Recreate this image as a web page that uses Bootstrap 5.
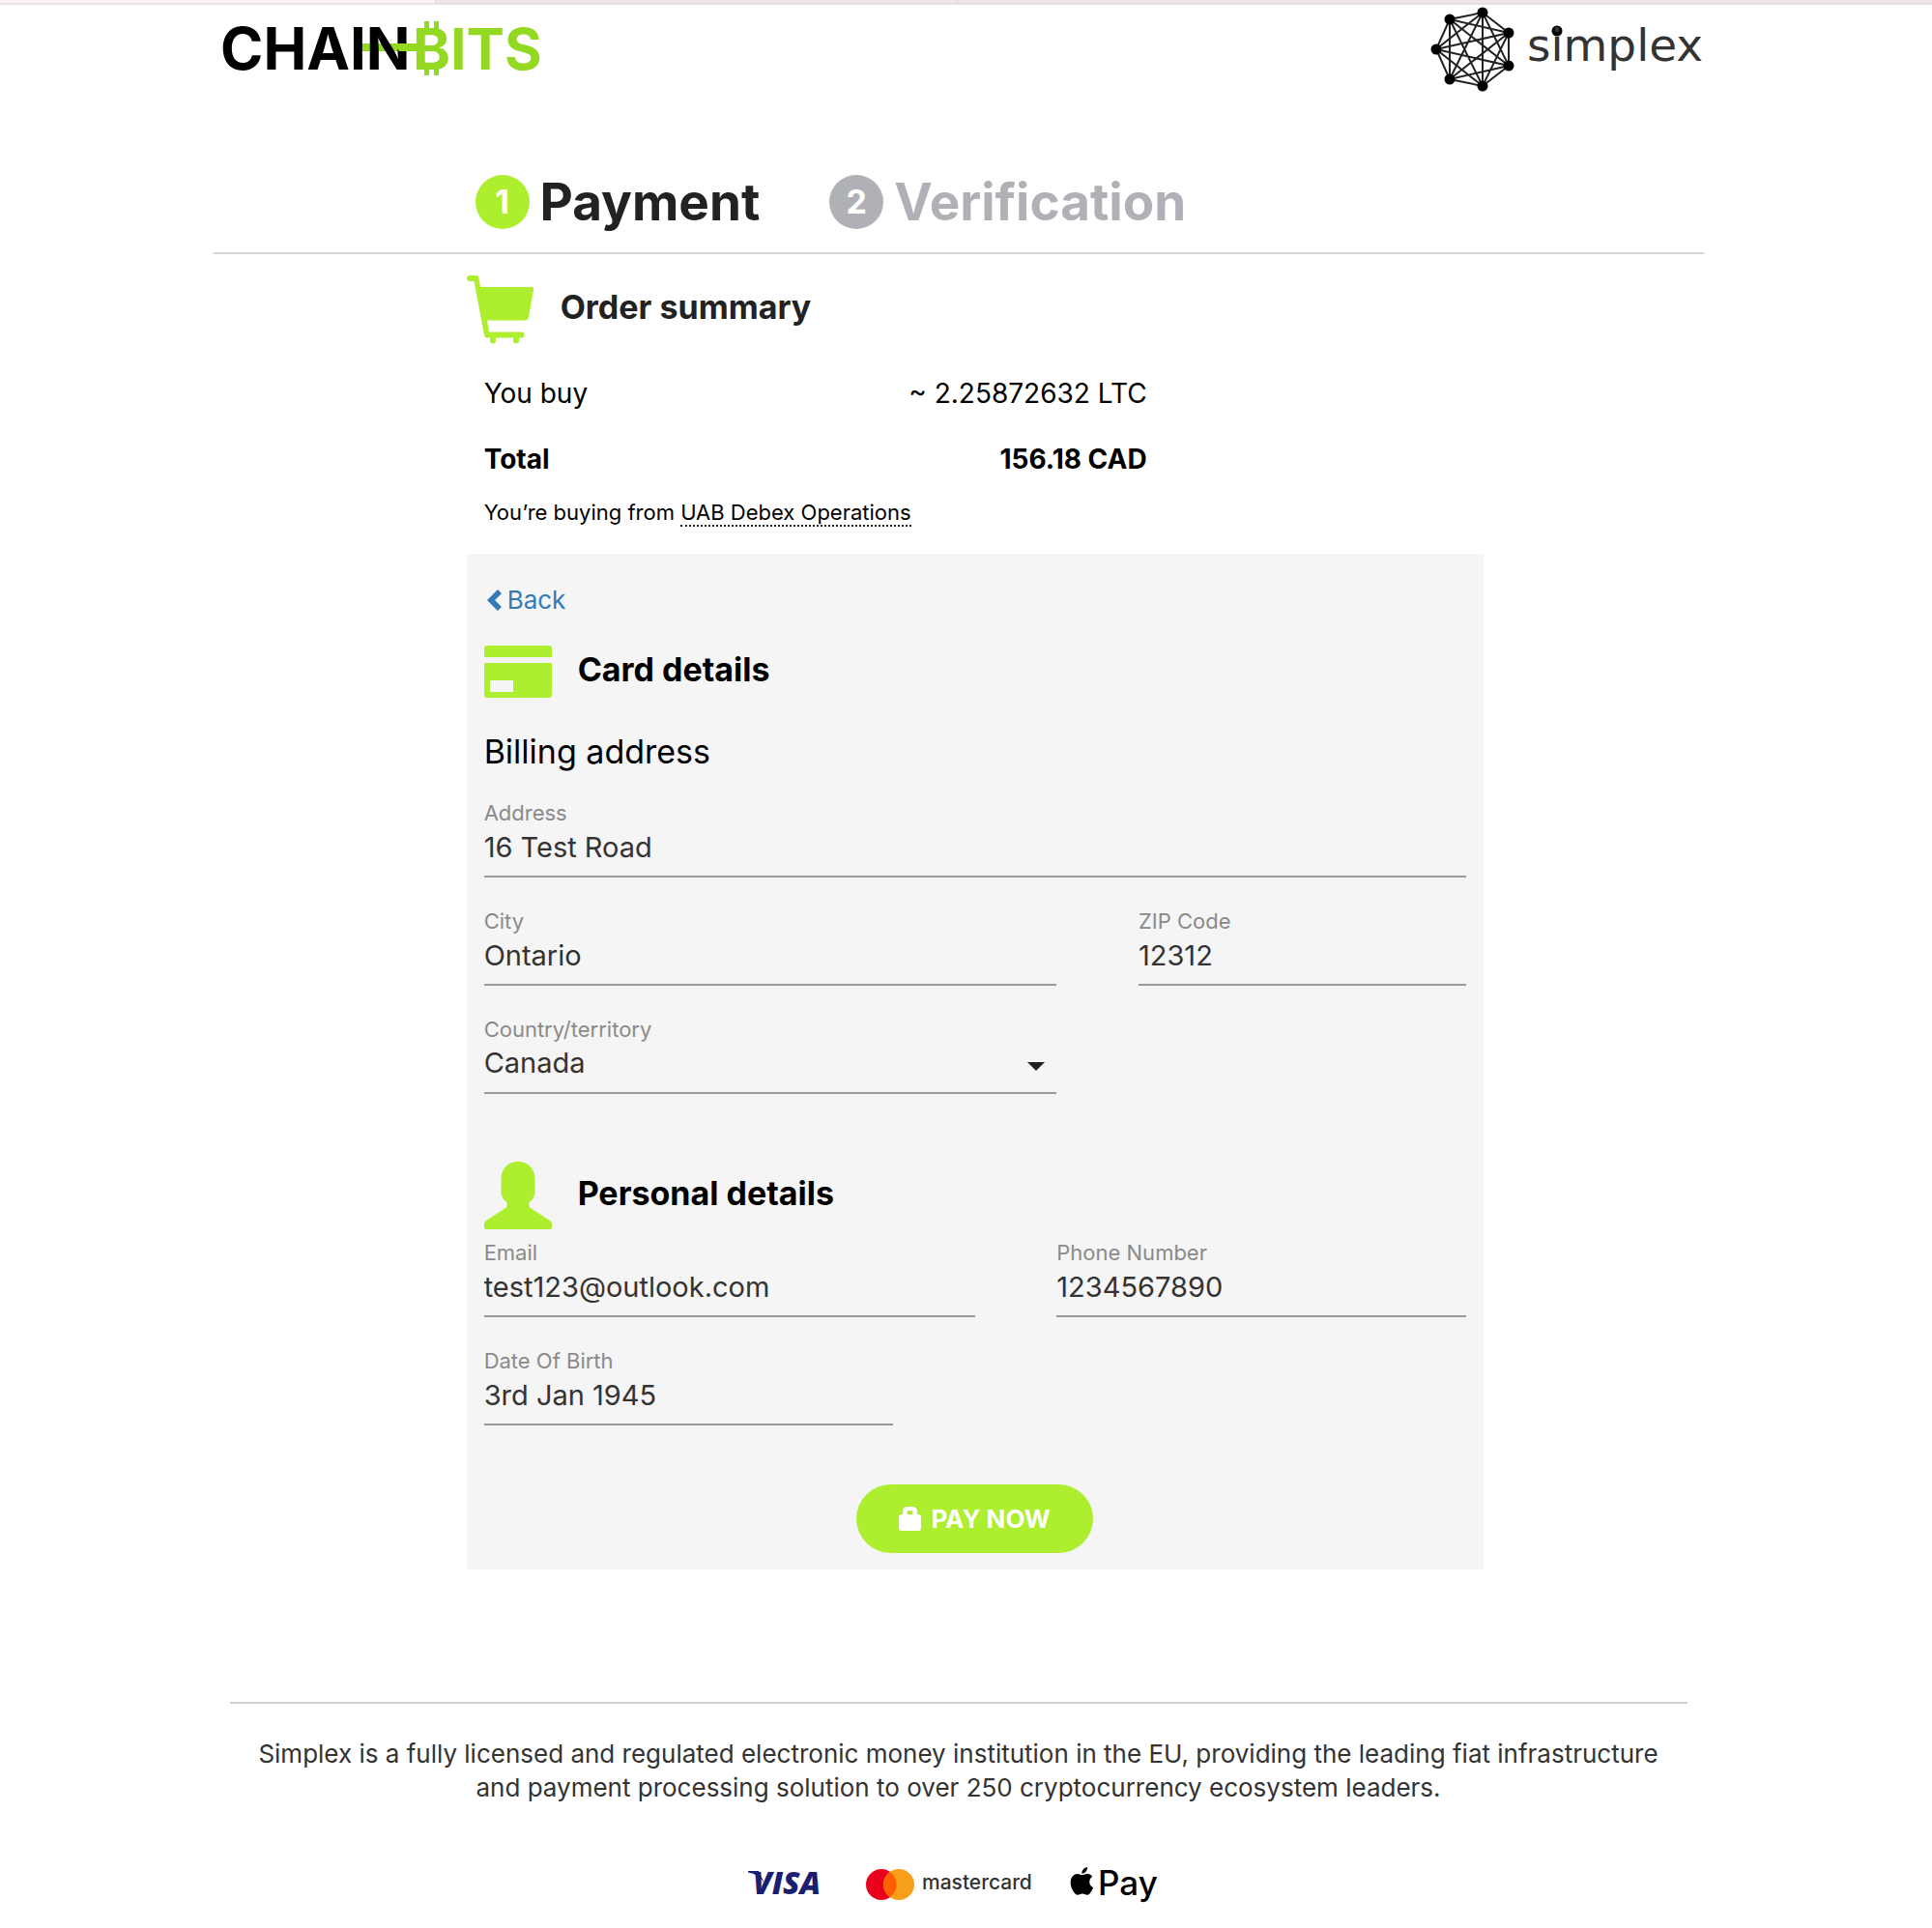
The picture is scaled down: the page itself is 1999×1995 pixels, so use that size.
<!DOCTYPE html>
<html lang="en">
<head>
<meta charset="utf-8">
<meta name="viewport" content="width=device-width, initial-scale=1">
<title>Payment</title>
<link href="https://cdn.jsdelivr.net/npm/bootstrap@5.3.0/dist/css/bootstrap.min.css" rel="stylesheet">
<style>
  :root { --lime: #adee2f; --ink: #222; }
  body { font-family: Inter, "Open Sans", sans-serif; color: #000; background: #fff; }
  svg { display: block; flex: none; overflow: visible; }

  .tab-strip { height: 5px; background: #eee5ea; border-bottom: 2px solid #e5e2e6; }
  .tab-strip span { border-right: 1px solid #d9d3d8; }
  .tab-open { width: 451px; background: #fbf2f7; }
  .tab-next { width: 540px; }

  .page-gutter { padding-right: 16px; }
  .page-wrap { width: 100%; max-width: 1542px; margin: 0 auto; }
  .brand-bar { height: 90px; padding-left: 8px; }
  .steps { margin-top: 86px; padding: 0 0 24px 271px; gap: 72px; border-bottom: 2px solid #d6d6d6; font-size: 53px; line-height: 56px; font-weight: 700; color: var(--ink); }
  .steps li { gap: 11px; }
  .step-dot { width: 56px; height: 56px; border-radius: 50%; background: var(--lime); color: #fff; font-size: 34px; }
  .step-off { color: #b0b1b6; }
  .step-off .step-dot { background: #b0b1b6; }

  .checkout { width: 1052px; max-width: 100%; margin-left: 17%; }
  .sec-title { height: 70px; gap: 27px; }
  .sec-title h2 { font-size: 34px; line-height: 40px; font-weight: 700; margin: 0; padding-bottom: 4px; }
  .order-box { padding-top: 22px; }
  .order-head { color: var(--ink); }
  .order-lines { padding: 34px 0 0 18px; font-size: 28px; line-height: 36px; }
  .order-lines dl { width: 686px; max-width: 100%; margin: 0; }
  .order-lines dd { margin: 0; }
  .total-line { padding-top: 32px; }
  .seller { font-size: 22px; line-height: 26px; margin: 24px 0 30px; }
  .seller a { color: #000; text-decoration: none; border-bottom: 2px dotted #222; }

  .pay-panel { background: #f5f5f5; padding: 33px 18px 17px; }
  .back-link { color: #337ab7; font-size: 26px; line-height: 30px; gap: 6px; padding-left: 3px; text-decoration: none; }
  .card-head { margin-top: 24px; }
  .billing-title { font-size: 34px; line-height: 40px; font-weight: 400; margin: 28px 0 32px; }
  .field { margin-bottom: 34px; }
  .field label { display: block; font-size: 22px; line-height: 22px; color: #8a8a8a; margin-bottom: 6px; }
  .field input, .field select { display: block; width: 100%; height: 50px; padding: 0 0 12px; border: 0; border-bottom: 2px solid #999; border-radius: 0; background: transparent; color: #333; font-size: 29px; line-height: 36px; appearance: none; outline: 0; }
  .select-box { position: relative; }
  .select-box::after { content: ""; position: absolute; right: 12px; top: 17px; border: 9px solid transparent; border-top-color: var(--ink); border-bottom: 0; pointer-events: none; }
  .person-head { margin: 36px 0 13px; }
  .pay-btn { height: 71px; padding: 0 44px; gap: 10px; margin-top: 27px; border: 0; border-radius: 36px; background: var(--lime); color: #fff; font-size: 26px; line-height: 30px; font-weight: 700; }

  .site-foot { margin: 137px 17px 0; padding-top: 34px; border-top: 2px solid #cfcfcf; font-size: 26px; line-height: 35px; color: #333; }
  .site-foot p { margin: 0; }
  .pay-logos { padding: 62px 0 26px; }
</style>
</head>
<body>
<div class="tab-strip d-flex"><span class="tab-open"></span><span class="tab-next"></span></div>

<div class="page-gutter">
<div class="page-wrap">
  <header class="brand-bar d-flex justify-content-between align-items-center">
    <svg width="332" height="60" viewBox="0 0 332 60" role="img" aria-label="ChainBits">
      <path d="M146 25h56v8h-56z" fill="#93d821"/>
      <text x="-1" y="52" font-family="Inter, sans-serif" font-weight="700" font-size="60" fill="#000">CHAIN</text>
      <path d="M178 25h28v8h-22z" fill="#93d821"/>
      <path d="M210 2h5v10h-5zM220 2h5v10h-5zM210 48h5v10h-5zM220 48h5v10h-5z" fill="#93d821"/>
      <text x="198" y="52" font-family="Inter, sans-serif" font-weight="700" font-size="59" fill="#93d821">BITS</text>
    </svg>
    <svg width="282" height="90" viewBox="0 0 282 90" role="img" aria-label="simplex">
      <g stroke="#222" stroke-width="2" fill="none">
        <path d="M53 8 19 15 5 46 19 77 53 84 80 63 80 29z"/>
        <path d="M53 8 5 46 53 84 80 29 19 15 19 77 80 63z"/>
        <path d="M53 8 19 77 80 29 5 46 80 63 19 15 53 84z"/>
        <path d="M53 8V84"/>
      </g>
      <g fill="#000"><circle cx="53" cy="8" r="5.500"/><circle cx="19" cy="15" r="5.500"/><circle cx="5" cy="46" r="5.500"/><circle cx="19" cy="77" r="5.500"/><circle cx="53" cy="84" r="5.500"/><circle cx="80" cy="63" r="5.500"/><circle cx="80" cy="29" r="5.500"/><circle cx="130" cy="27" r="5.500"/></g>
      <text x="99" y="58" font-family="'DejaVu Sans', sans-serif" font-size="47" fill="#333">simplex</text>
    </svg>
  </header>

  <ol class="steps list-unstyled d-flex mb-0">
    <li class="d-flex align-items-center"><span class="step-dot d-flex align-items-center justify-content-center">1</span>Payment</li>
    <li class="step-off d-flex align-items-center"><span class="step-dot d-flex align-items-center justify-content-center">2</span>Verification</li>
  </ol>

  <main class="checkout">
    <section class="order-box">
      <div class="sec-title order-head d-flex align-items-center">
        <svg width="70" height="70" viewBox="0 0 70 70" fill="#adee2f"><path d="M3 0h7q2 0 2.300 2l1.700 10h53q2.500 0 2 3l-5 28q-.6 3.500-4 3.500H21l2 12h34q2.500 0 2.500 3t-2.500 3h-3v3a3 3 0 0 1-6 0v-3H30v3a3 3 0 0 1-6 0v-3h-3q-2.500 0-3-3L7.500 6H3Q0 6 0 3t3-3z"/></svg>
        <h2>Order summary</h2>
      </div>
      <div class="order-lines">
        <dl>
          <div class="d-flex justify-content-between"><dt class="fw-normal">You buy</dt><dd>~ 2.25872632 LTC</dd></div>
          <div class="total-line d-flex justify-content-between fw-bold"><dt>Total</dt><dd>156.18 CAD</dd></div>
        </dl>
        <p class="seller">You’re buying from <a href="#">UAB Debex Operations</a></p>
      </div>
    </section>

    <form class="pay-panel">
      <a class="back-link d-flex align-items-center" href="#">
        <svg width="15" height="22" viewBox="0 0 15 22"><path d="M11 0l4 4-7 7 7 7-4 4L0 11z" fill="#337ab7"/></svg>Back
      </a>
      <div class="sec-title card-head d-flex align-items-center">
        <svg width="70" height="54" viewBox="0 0 70 54" fill="#adee2f"><path d="M3 0h64q3 0 3 3v9H0V3q0-3 3-3zM0 18h70v33q0 3-3 3H3q-3 0-3-3zM6 36v12h24V36z" fill-rule="evenodd"/></svg>
        <h2>Card details</h2>
      </div>
      <h3 class="billing-title">Billing address</h3>
      <div class="field"><label for="address">Address</label><input id="address" type="text" value="16 Test Road"></div>
      <div class="row g-0">
        <div class="field col-7"><label for="city">City</label><input id="city" type="text" value="Ontario"></div>
        <div class="field col-4 offset-1"><label for="zip">ZIP Code</label><input id="zip" type="text" value="12312"></div>
        <div class="field col-7"><label for="country">Country/territory</label><div class="select-box"><select id="country"><option>Canada</option></select></div></div>
      </div>

      <div class="sec-title person-head d-flex align-items-center">
        <svg width="70" height="70" viewBox="0 0 70 70" fill="#adee2f"><path d="M35 0C46 0 52.500 8 52.500 18v12c0 6-2 9-6 12v5l21.500 14q2 1.500 2 3v4q0 2-2 2H2q-2 0-2-2v-4q0-1.500 2-3l21.500-14v-5c-4-3-6-6-6-12V18C17.500 8 24 0 35 0z"/></svg>
        <h2>Personal details</h2>
      </div>
      <div class="row g-0">
        <div class="field col-6"><label for="email">Email</label><input id="email" type="text" value="test123@outlook.com"></div>
        <div class="field col-5 offset-1"><label for="phone">Phone Number</label><input id="phone" type="text" value="1234567890"></div>
        <div class="field col-5"><label for="dob">Date Of Birth</label><input id="dob" type="text" value="3rd Jan 1945"></div>
      </div>
      <button type="button" class="pay-btn d-flex align-items-center mx-auto">
        <svg width="23" height="25" viewBox="0 0 23 25" fill="#fff"><path fill-rule="evenodd" d="M4 8V5q0-5 5-5h5q5 0 5 5v3h1q3 0 3 3v11q0 3-3 3H3q-3 0-3-3V11q0-3 3-3zm4.500 0h6V6q0-2-2-2h-2q-2 0-2 2z"/></svg>PAY NOW
      </button>
    </form>
  </main>

  <footer class="site-foot text-center">
    <p>Simplex is a fully licensed and regulated electronic money institution in the EU, providing the leading fiat infrastructure<br>and payment processing solution to over 250 cryptocurrency ecosystem leaders.</p>
    <div class="pay-logos d-flex justify-content-center">
      <svg width="436" height="40" viewBox="0 0 436 40" role="img" aria-label="Visa, mastercard, Apple Pay">
        <path d="M0 7h11l6 13Q11 10 0 8.500z" fill="#1a1f71"/>
        <text x="5" y="31" font-family="'Open Sans', sans-serif" font-weight="800" font-style="italic" font-size="32" fill="#1a1f71">VISA</text>
        <circle cx="138" cy="21" r="16" fill="#eb001b"/><circle cx="156" cy="21" r="16" fill="#f79e1b"/>
        <path d="M147 8a16 16 0 0 1 0 26a16 16 0 0 1 0-26z" fill="#ff5f00"/>
        <text x="180" y="26" font-family="Inter, sans-serif" font-weight="500" font-size="21" fill="#333">mastercard</text>
        <path transform="translate(331 3) scale(1.200)" d="M12.152 6.896c-.948 0-2.415-1.078-3.960-1.040-2.040.027-3.910 1.183-4.961 3.014-2.117 3.675-.546 9.103 1.519 12.090 1.013 1.454 2.208 3.090 3.792 3.039 1.520-.065 2.090-.987 3.935-.987 1.831 0 2.350.987 3.960.948 1.637-.026 2.676-1.480 3.676-2.948 1.156-1.688 1.636-3.325 1.662-3.415-.039-.013-3.182-1.221-3.220-4.857-.026-3.040 2.480-4.494 2.597-4.559-1.429-2.090-3.623-2.324-4.390-2.376-2-.156-3.675 1.090-4.610 1.090zM15.530 3.830c.843-1.012 1.400-2.427 1.245-3.830-1.207.052-2.662.805-3.532 1.818-.780.896-1.454 2.338-1.273 3.714 1.338.104 2.715-.688 3.559-1.701"/>
        <text x="362" y="32" font-family="Inter, sans-serif" font-weight="500" font-size="35" fill="#000">Pay</text>
      </svg>
    </div>
  </footer>
</div>
</div>
<script src="https://cdn.jsdelivr.net/npm/bootstrap@5.3.0/dist/js/bootstrap.bundle.min.js"></script>
</body>
</html>
